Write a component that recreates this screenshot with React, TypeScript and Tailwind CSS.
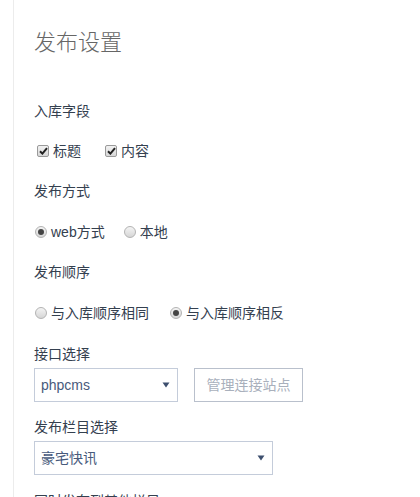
const font = { fontFamily: '"Liberation Sans", "Noto Sans CJK SC", sans-serif' };

function Check({ label }: { label: string }) {
  return (
    <label className="flex items-center">
      <span className="ml-[3px] flex h-[12px] w-[12px] items-center justify-center rounded-[2px] border border-[#9a9a9a] bg-gradient-to-b from-[#f2f2f2] to-[#d8d8d8]">
        <svg width="9" height="8" viewBox="0 0 9 8">
          <path d="M1 4.2 L3.4 6.6 L8 1.2" fill="none" stroke="#222" strokeWidth="2" />
        </svg>
      </span>
      <span className="ml-[4px]">{label}</span>
    </label>
  );
}

function Radio({ label, checked }: { label: string; checked?: boolean }) {
  return (
    <label className="flex items-center">
      <span className="ml-[1px] flex h-[12px] w-[12px] items-center justify-center rounded-full border border-[#b3b3b3] bg-gradient-to-b from-[#f4f4f4] to-[#d6d6d6]">
        {checked && <span className="h-[6px] w-[6px] rounded-full bg-[#444]" />}
      </span>
      <span className="ml-[4px]">{label}</span>
    </label>
  );
}

function Select({ value, width }: { value: string; width: string }) {
  return (
    <div className={`flex h-[34px] items-center justify-between border border-[#c4ccda] bg-white pl-[6px] pr-[7px] text-[#485a7c] ${width}`}>
      <span>{value}</span>
      <svg width="8" height="6" viewBox="0 0 8 6">
        <path d="M0.5 0.5 L7.5 0.5 L4 5.5 Z" fill="#3d4f6e" />
      </svg>
    </div>
  );
}

export default function App() {
  return (
    <div className="h-[497px] overflow-hidden bg-white" style={font}>
      <div className="ml-[13px] min-h-full border-l border-[#ececec] pl-[20px] text-[14px] leading-[20px] text-[#34404f]">
        <h1 className="pt-[28px] text-[22px] leading-[30px] font-light text-[#666]">发布设置</h1>

        <p className="mt-[43px]">入库字段</p>
        <div className="mt-[20px] flex gap-[21px]">
          <Check label="标题" />
          <Check label="内容" />
        </div>

        <p className="mt-[20px]">发布方式</p>
        <div className="mt-[21px] flex gap-[18px]">
          <Radio label="web方式" checked />
          <Radio label="本地" />
        </div>

        <p className="mt-[20px]">发布顺序</p>
        <div className="mt-[21px] flex gap-[20px]">
          <Radio label="与入库顺序相同" />
          <Radio label="与入库顺序相反" checked />
        </div>

        <p className="mt-[21px]">接口选择</p>
        <div className="mt-[4px] flex gap-[16px]">
          <Select value="phpcms" width="w-[144px]" />
          <button className="h-[34px] w-[109px] border border-[#b9c0cc] bg-white text-[#a9b0bc]">
            管理连接站点
          </button>
        </div>

        <p className="mt-[15px]">发布栏目选择</p>
        <div className="mt-[4px]">
          <Select value="豪宅快讯" width="w-[239px]" />
        </div>

        <p className="mt-[16px]">同时发布到其他栏目</p>
      </div>
    </div>
  );
}
